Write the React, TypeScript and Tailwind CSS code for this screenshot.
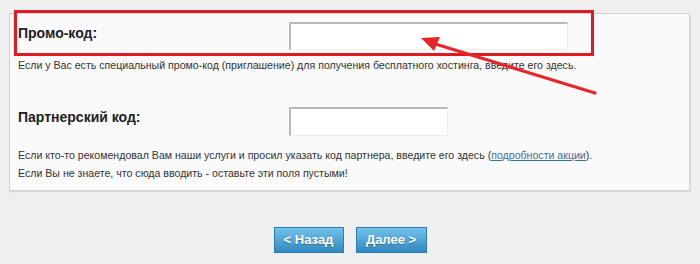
const App = () => {
  return (
    <div className="relative w-[700px] h-[264px] bg-[#efefef] overflow-hidden pt-[13px] pl-[9px] font-['Liberation_Sans',Arial,sans-serif]">
      {/* panel */}
      <div className="w-[681px] h-[178px] bg-[#fafafa] border border-[#d3d3d3] shadow-[1px_1px_1px_rgba(0,0,0,0.08)] pt-[8px] pl-[8px]">
        <div className="flex items-start">
          <div className="w-[271px] mt-[3px] text-[14px] leading-4 font-bold text-[#222]">Промо-код:</div>
          <div className="w-[279px] h-[28px] bg-white border-t-2 border-l-2 border-[#b8b8b8] border-r border-b border-r-[#eee] border-b-[#eee]" />
        </div>
        <p className="mt-[8px] text-[10.6px] leading-[14px] text-[#333]">
          Если у Вас есть специальный промо-код (приглашение) для получения бесплатного хостинга, введите его здесь.
        </p>

        <div className="flex items-start mt-[35px]">
          <div className="w-[271px] mt-[2px] text-[14px] leading-4 font-bold text-[#222]">Партнерский код:</div>
          <div className="w-[159px] h-[29px] bg-white border-t-2 border-l-2 border-[#b8b8b8] border-r border-b border-r-[#eee] border-b-[#eee]" />
        </div>
        <p className="mt-[10px] text-[10.6px] leading-[18px] text-[#333]">
          Если кто-то рекомендовал Вам наши услуги и просил указать код партнера, введите его здесь (
          <a className="text-[#3b6e98] underline">подробности акции</a>).
          <br />
          Если Вы не знаете, что сюда вводить - оставьте эти поля пустыми!
        </p>
      </div>

      {/* buttons */}
      <div className="flex justify-center gap-[12px] mt-[36px] -ml-[9px]">
        <button className="w-[70px] h-[26px] border border-[#2c7db3] bg-gradient-to-b from-[#74c3ec] to-[#2e88c0] text-white text-[13px] font-bold [text-shadow:0_1px_1px_rgba(0,0,0,0.3)]">
          &lt; Назад
        </button>
        <button className="w-[71px] h-[26px] border border-[#2c7db3] bg-gradient-to-b from-[#74c3ec] to-[#2e88c0] text-white text-[13px] font-bold [text-shadow:0_1px_1px_rgba(0,0,0,0.3)]">
          Далее &gt;
        </button>
      </div>

      {/* annotation overlay */}
      <div className="absolute left-[14px] top-[10px] w-[580px] h-[46px] border-[3px] border-[#e01a22]" />
      <svg className="absolute left-0 top-0" width="700" height="264" viewBox="0 0 700 264">
        <line x1="595" y1="93" x2="432" y2="43" stroke="#e8262a" strokeWidth="3.2" strokeLinecap="round" />
        <polygon points="421,38 440,37 434,51" fill="#e8262a" />
      </svg>
    </div>
  );
};

export default App;
